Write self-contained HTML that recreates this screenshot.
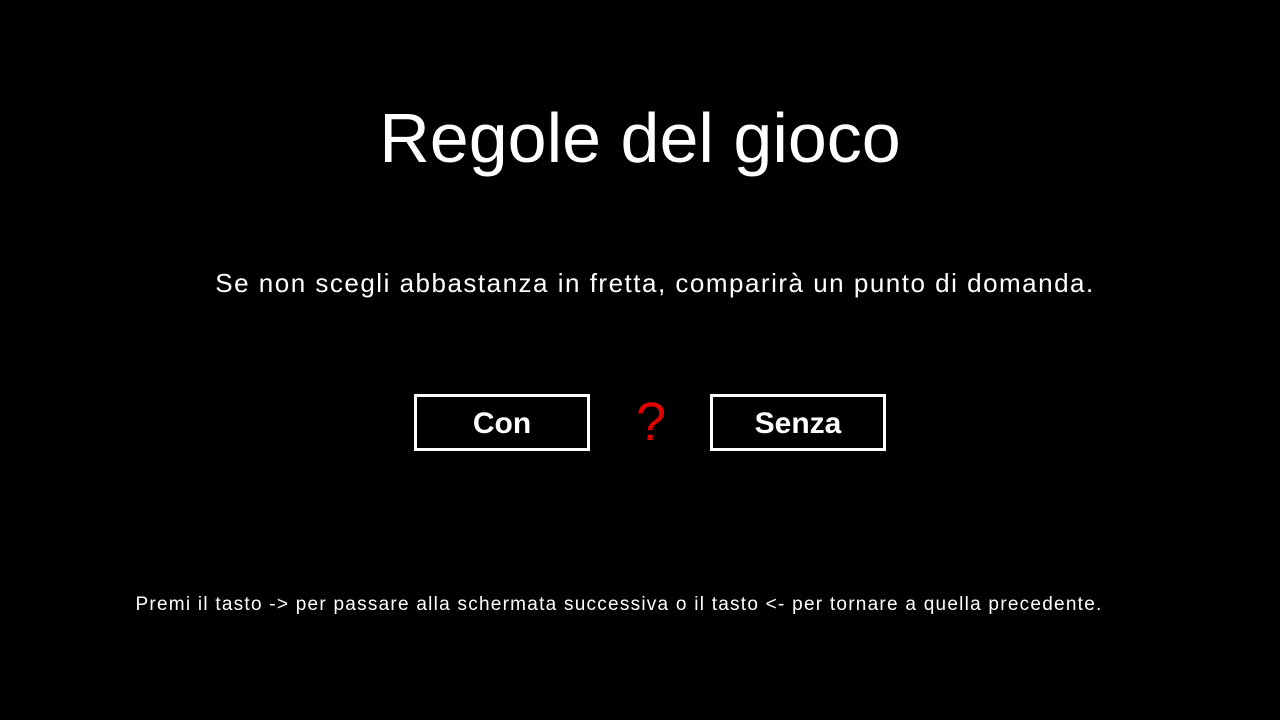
<!DOCTYPE html>
<html><head><meta charset="utf-8"><style>
html,body{margin:0;padding:0;background:#000;width:1280px;height:720px;overflow:hidden}
body{position:relative;font-family:"Liberation Sans",sans-serif;color:#fff}
.t{position:absolute;white-space:nowrap;left:0;width:1280px;text-align:center}
.box{position:absolute;border:3px solid #fff;box-sizing:border-box;height:57px;width:176px;top:394px;font-weight:bold;font-size:30px;text-align:center;line-height:53px}
</style></head><body>
<div class="t" style="top:98px;font-size:70px;font-weight:300;left:0;">Regole del gioco</div>
<div class="t" style="top:268px;font-size:26px;letter-spacing:1.5px;left:15px;">Se non scegli abbastanza in fretta, comparirà un punto di domanda.</div>
<div class="box" style="left:414px">Con</div>
<div class="box" style="left:710px">Senza</div>
<div style="position:absolute;left:636px;top:392px;font-size:54px;color:#e00000;line-height:60px;">?</div>
<div class="t" style="top:594px;font-size:19px;letter-spacing:1.25px;left:-21px;">Premi il tasto -&gt; per passare alla schermata successiva o il tasto &lt;- per tornare a quella precedente.</div>
</body></html>
